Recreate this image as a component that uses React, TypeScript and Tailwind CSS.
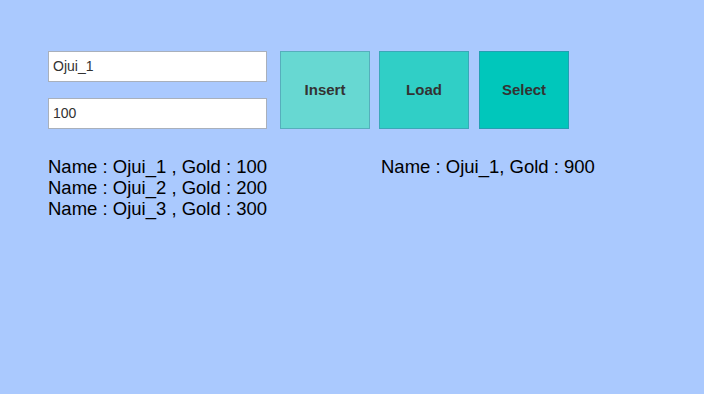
import React from "react";

export default function App() {
  const font = { fontFamily: '"Liberation Sans", Arial, sans-serif' };
  return (
    <div className="w-[704px] h-[394px] bg-[#aac9fe] pl-[48px] pt-[51px]" style={font}>
      <div className="flex">
        <div className="flex flex-col gap-[16px] w-[219px]">
          <div className="h-[31px] bg-white border border-[#a9b0bb] pl-[4px] flex items-center text-[14px] text-[#323232]">
            Ojui_1
          </div>
          <div className="h-[31px] bg-white border border-[#a9b0bb] pl-[4px] flex items-center text-[14px] text-[#323232]">
            100
          </div>
        </div>
        <div className="flex ml-[13px]">
          <div className="w-[90px] h-[78px] bg-[#67d8d2] border border-[#56aebc] flex items-center justify-center text-[15px] font-bold text-[#333333]">
            Insert
          </div>
          <div className="ml-[9px] w-[90px] h-[78px] bg-[#30cfc6] border border-[#3aa8b8] flex items-center justify-center text-[15px] font-bold text-[#333333]">
            Load
          </div>
          <div className="ml-[10px] w-[90px] h-[78px] bg-[#00c7bb] border border-[#22a0b2] flex items-center justify-center text-[15px] font-bold text-[#333333]">
            Select
          </div>
        </div>
      </div>
      <div className="flex mt-[27px] text-[18.5px] leading-[21px] text-black">
        <div className="w-[333px]">
          <div>Name : Ojui_1 , Gold : 100</div>
          <div>Name : Ojui_2 , Gold : 200</div>
          <div>Name : Ojui_3 , Gold : 300</div>
        </div>
        <div>Name : Ojui_1, Gold : 900</div>
      </div>
    </div>
  );
}
